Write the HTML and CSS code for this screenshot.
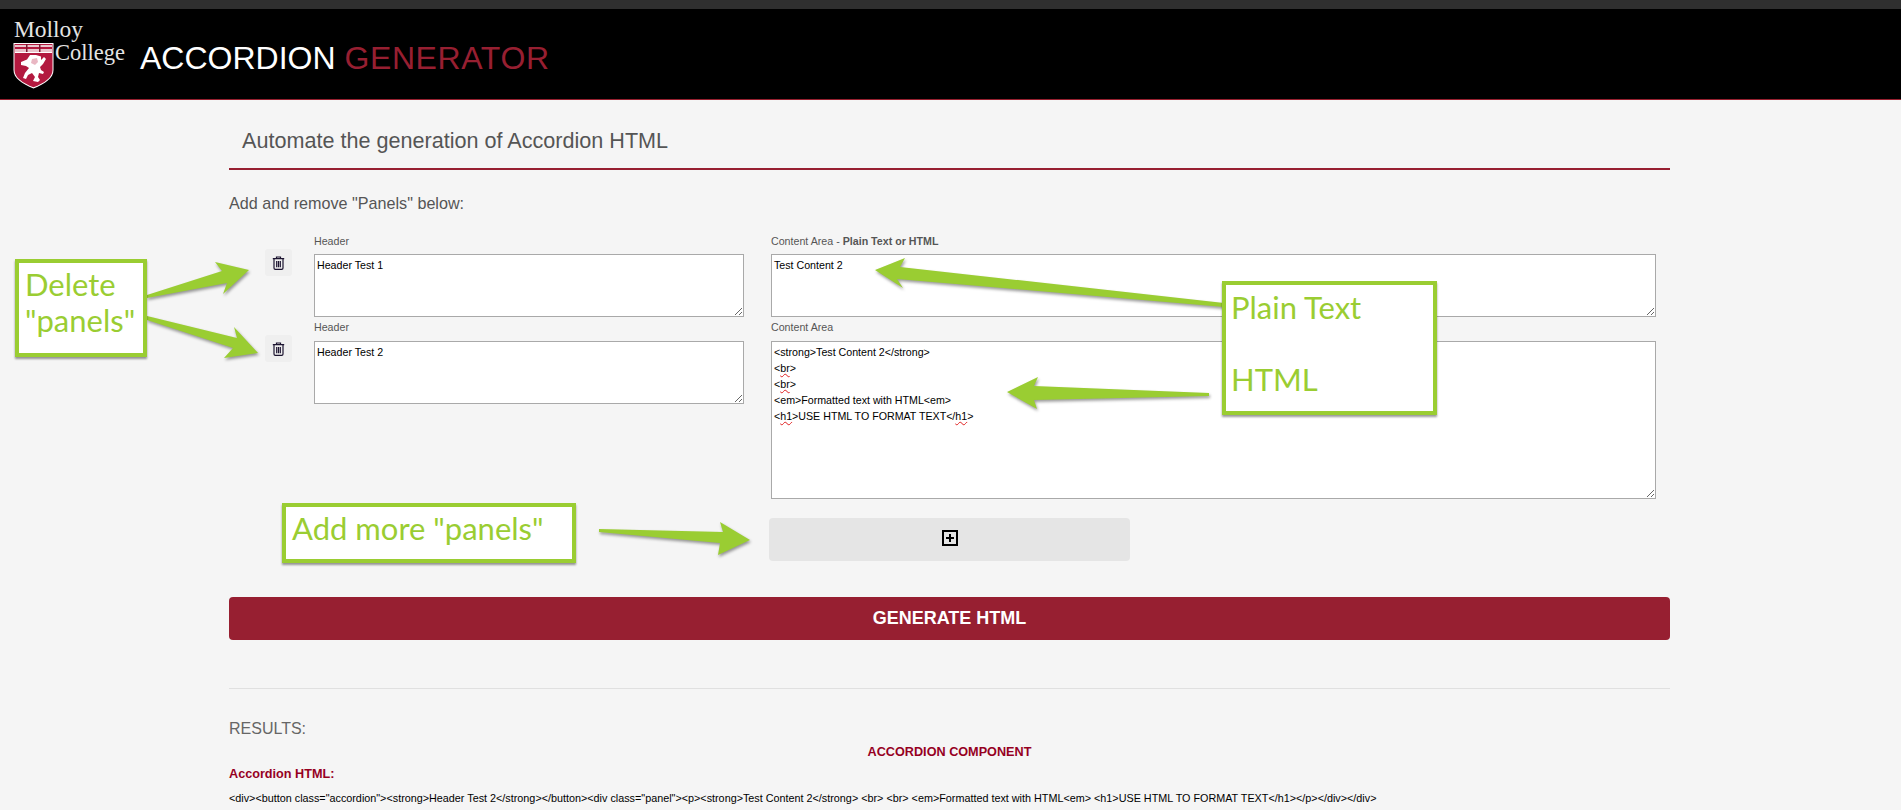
FILE: index.html
```html
<!DOCTYPE html>
<html lang="en">
<head>
<meta charset="utf-8">
<title>Accordion Generator</title>
<link rel="stylesheet" href="styles.css">
</head>
<body>
<div class="topbar"></div>
<header class="site-header">
  <svg class="logo" viewBox="0 0 119 78" width="119" height="78" aria-label="Molloy College">
    <text class="logo-text" x="1" y="24" font-size="24" textLength="69" lengthAdjust="spacingAndGlyphs">Molloy</text>
    <text class="logo-text" x="42" y="47" font-size="24" textLength="70" lengthAdjust="spacingAndGlyphs">College</text>
    <path d="M0.500 30H40.500V57C40.500 65 32 71 20.500 75.500C9 71 0.500 65 0.500 57Z" fill="#fff"/>
    <path d="M1.500 31H39.500V57C39.500 64.500 31.500 70 20.500 74.300C9.500 70 1.500 64.500 1.500 57Z" fill="#b3193f"/>
    <rect x="2" y="32" width="37" height="2" fill="#e9c5cc"/>
    <rect x="2" y="36" width="37" height="3" fill="#e9c5cc"/>
    <rect x="2" y="39" width="37" height="1" fill="#fff"/>
    <rect x="13" y="31" width="1.500" height="8" fill="#7d1830"/>
    <rect x="26" y="31" width="1.500" height="8" fill="#7d1830"/>
    <path d="M8 49L14 46.500L17 42L23 42L28 43.500L28 47L31 44L33 46L30 51L27 54L28 57L31 59L30 61L26 60L25 64L27 67L25 69L20 68L22 64L19 60L15 62L13 66L10 65L12 60L16 55L13 53L8 52Z" fill="#fff"/>
    <path d="M19 46L24 45L25 49L22 52L18 50Z" fill="#e9b7c3"/>
  </svg>
  <h1 class="site-title">ACCORDION <span class="accent">GENERATOR</span></h1>
</header>

<main class="page">
  <h2 class="page-title">Automate the generation of Accordion HTML</h2>
  <p class="intro">Add and remove "Panels" below:</p>

  <section class="panel-row">
    <button class="trash" type="button" aria-label="Delete">
      <svg viewBox="0 0 13 14" width="13" height="14"><path d="M4.500 2.500V1H8.500V2.500M0.800 2.700H12.200M2 3V12C2 12.800 2.500 13.300 3.300 13.300H9.700C10.500 13.300 11 12.800 11 12V3M4.700 5V11.200M6.500 5V11.200M8.300 5V11.200" fill="none" stroke="#1c1430" stroke-width="1.200"/></svg>
    </button>
    <div class="field header-field">
      <div class="label">Header</div>
      <div class="box short">Header Test 1</div>
    </div>
    <div class="field content-field">
      <div class="label">Content Area - <b>Plain Text or HTML</b></div>
      <div class="box short">Test Content 2</div>
    </div>
  </section>

  <section class="panel-row">
    <button class="trash" type="button" aria-label="Delete">
      <svg viewBox="0 0 13 14" width="13" height="14"><path d="M4.500 2.500V1H8.500V2.500M0.800 2.700H12.200M2 3V12C2 12.800 2.500 13.300 3.300 13.300H9.700C10.500 13.300 11 12.800 11 12V3M4.700 5V11.200M6.500 5V11.200M8.300 5V11.200" fill="none" stroke="#1c1430" stroke-width="1.200"/></svg>
    </button>
    <div class="field header-field">
      <div class="label">Header</div>
      <div class="box short">Header Test 2</div>
    </div>
    <div class="field content-field">
      <div class="label">Content Area</div>
      <div class="box tall">&lt;strong&gt;Test Content 2&lt;/strong&gt;<br>&lt;<span class="spell">br</span>&gt;<br>&lt;<span class="spell">br</span>&gt;<br>&lt;em&gt;Formatted text with HTML&lt;em&gt;<br>&lt;<span class="spell">h1</span>&gt;USE HTML TO FORMAT TEXT&lt;/<span class="spell">h1</span>&gt;</div>
    </div>
  </section>

  <button class="add" type="button" aria-label="Add panel">
    <svg viewBox="0 0 16 16" width="16" height="16"><path d="M1 1H15V15H1ZM8 4V12M4 8H12" fill="none" stroke="#000" stroke-width="2"/></svg>
  </button>

  <button class="generate" type="button">GENERATE HTML</button>

  <hr class="rule">

  <div class="results-title">RESULTS:</div>
  <div class="component-title">ACCORDION COMPONENT</div>
  <div class="html-title">Accordion HTML:</div>
  <div class="code">&lt;div&gt;&lt;button class="accordion"&gt;&lt;strong&gt;Header Test 2&lt;/strong&gt;&lt;/button&gt;&lt;div class="panel"&gt;&lt;p&gt;&lt;strong&gt;Test Content 2&lt;/strong&gt; &lt;br&gt; &lt;br&gt; &lt;em&gt;Formatted text with HTML&lt;em&gt; &lt;h1&gt;USE HTML TO FORMAT TEXT&lt;/h1&gt;&lt;/p&gt;&lt;/div&gt;&lt;/div&gt;</div>
</main>

<svg class="arrows" viewBox="0 0 1901 810" width="1901" height="810" aria-hidden="true">
  <polygon points="147,295 222,271 215,262 249,270 223,294 227,283 147,298"/>
  <polygon points="147,316 237,338 234,327 258,353 224,358 233,348 147,320"/>
  <polygon points="875,270 905,258 900,267 1224,303 1224,307 897,279 903,288"/>
  <polygon points="1007,392 1038,377 1034,386 1209,393 1209,396 1034,400 1037,409"/>
  <polygon points="599,529 723,532 720,522 750,540 718,555 720,543 599,532"/>
</svg>
<div class="callout delete-note">Delete<br>"panels"</div>
<div class="callout types-note">Plain Text<br><br>HTML</div>
<div class="callout add-note">Add more "panels"</div>
</body>
</html>
```

FILE: styles.css
```css
* { box-sizing: border-box; }
html, body { margin: 0; padding: 0; }
body {
  position: relative;
  height: 810px;
  overflow: hidden;
  background: #f5f5f5;
  color: #555;
  font-family: "Liberation Sans", Arial, sans-serif;
}
.topbar { height: 9px; background: #2f2f2f; }
.site-header {
  display: flex;
  align-items: flex-start;
  gap: 8px;
  height: 91px;
  padding: 4px 0 0 13px;
  background: #000;
  border-bottom: 1px solid #96202f;
}
.logo { display: block; flex: none; }
.logo-text { font-family: "Liberation Serif", serif; fill: #e4e4e4; }
.site-title {
  margin: 26px 0 0;
  font-size: 32px;
  line-height: 38px;
  font-weight: 400;
  color: #fff;
}
.accent { color: #971f31; letter-spacing: .6px; }
.page { width: 1441px; margin-left: 229px; }
.page-title {
  margin: 0;
  padding: 27px 0 13px 13px;
  font-size: 21.600px;
  line-height: 28px;
  font-weight: 400;
  color: #555;
  border-bottom: 2px solid #971f31;
}
.intro { margin: 24px 0 0; font-size: 16.170px; line-height: 18px; height: 21px; }
.panel-row {
  display: flex;
  align-items: flex-start;
  padding-left: 36px;
  margin-bottom: 4px;
}
.page .panel-row:first-of-type { margin-top: 19px; }
.trash {
  flex: none;
  width: 27px;
  height: 27px;
  margin: 15px 22px 0 0;
  padding: 0;
  display: flex;
  align-items: center;
  justify-content: center;
  border: 0;
  border-radius: 3px;
  background: #efefef;
}
.panel-row + .panel-row .trash { margin-top: 14px; }
.field { display: flex; flex-direction: column; }
.header-field { width: 430px; margin-right: 27px; }
.content-field { width: 885px; }
.label { height: 20px; font-size: 10.670px; line-height: 14px; color: #555; }
.label b { font-weight: 700; }
.panel-row + .panel-row .label { line-height: 12px; }
.box {
  width: 100%;
  padding: 2px 2px;
  background: #fff;
  border: 1px solid #a9a9a9;
  color: #000;
  font-size: 10.670px;
  line-height: 16px;
  overflow: auto;
  resize: both;
}
.short { height: 63px; }
.tall { height: 158px; }
.spell { text-decoration: underline wavy #e02020 1px; }
.add {
  display: flex;
  align-items: center;
  justify-content: center;
  width: 361px;
  height: 43px;
  margin: 19px 0 0 540px;
  padding: 0 0 3px;
  border: 0;
  border-radius: 4px;
  background: #e5e5e5;
}
.generate {
  display: block;
  width: 100%;
  height: 43px;
  margin-top: 36px;
  border: 0;
  border-radius: 4px;
  background: #971f31;
  color: #fff;
  font-family: inherit;
  font-size: 18px;
  font-weight: 700;
}
.rule { height: 1px; margin: 48px 0 0; border: 0; background: #e0e0e0; }
.results-title { margin-top: 31px; font-size: 16px; line-height: 18px; color: #666; }
.component-title { margin-top: 7px; text-align: center; font-size: 12.670px; line-height: 14px; font-weight: 700; color: #96001f; }
.html-title { margin-top: 8px; font-size: 12.670px; line-height: 15px; font-weight: 700; color: #96001f; }
.code { margin-top: 9px; font-size: 10.800px; line-height: 14px; color: #000; white-space: nowrap; }

.arrows { position: absolute; left: 0; top: 0; pointer-events: none; }
.arrows polygon { fill: #9acd32; filter: drop-shadow(1px 2px 1.500px rgba(0,0,0,.4)); }
.callout {
  position: absolute;
  background: #fff;
  border: 4px solid #9acd32;
  box-shadow: 0 2px 2px rgba(0,0,0,.4);
  color: #9acd32;
  font-family: "Lato", sans-serif;
  font-size: 31px;
  line-height: 36px;
  white-space: nowrap;
}
.delete-note { left: 15px; top: 259px; width: 132px; height: 98px; padding: 3px 0 0 6px; }
.types-note { left: 1222px; top: 281px; width: 215px; height: 134px; padding: 4px 0 0 5px; }
.add-note { left: 282px; top: 503px; width: 294px; height: 60px; padding: 3px 0 0 6px; }
```
